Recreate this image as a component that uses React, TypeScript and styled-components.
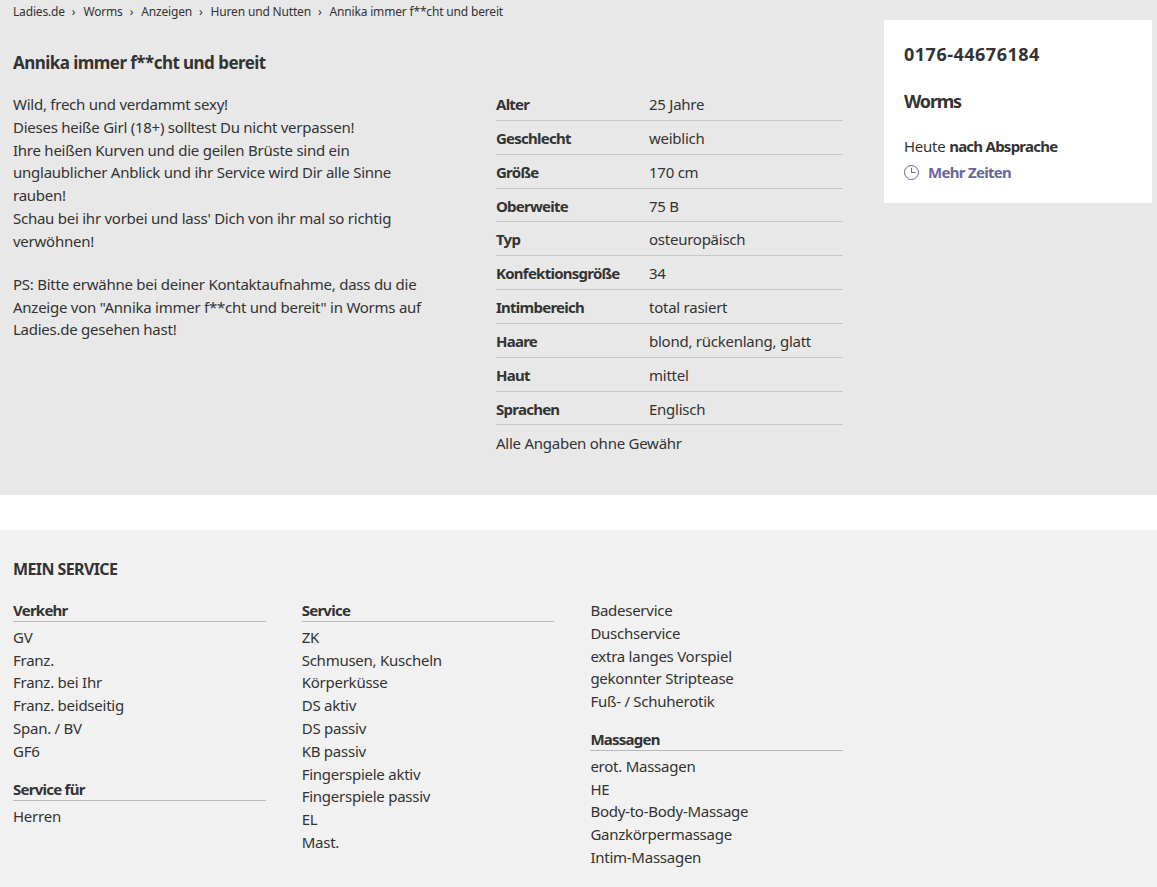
import React from 'react'
import styled, { createGlobalStyle } from 'styled-components'

const GlobalStyle = createGlobalStyle`
  html, body {
    margin: 0;
    padding: 0;
    background: #fff;
  }
  body {
    font-family: "Noto Sans", "Open Sans", sans-serif;
    font-size: 15px;
    color: #333;
    letter-spacing: -0.25px;
  }
  b {
    letter-spacing: -0.75px;
  }
`

const Page = styled.div`
  width: 1157px;
  height: 887px;
  overflow: hidden;
`

const Top = styled.div`
  background: #e8e8e8;
  height: 495px;
  display: flex;
  justify-content: space-between;
  padding: 0 5px 0 13px;
  box-sizing: border-box;
`

const Main = styled.div`
  width: 830px;
`

const Crumbs = styled.nav`
  display: flex;
  height: 23px;
  align-items: center;
  font-size: 12px;
  letter-spacing: -0.17px;
`

const Sep = styled.span`
  margin: 0 8px 0 7px;
`

const Title = styled.h1`
  margin: 28px 0 0;
  font-size: 17px;
  line-height: 24px;
  font-weight: 700;
  letter-spacing: -0.55px;
`

const Columns = styled.div`
  display: flex;
  justify-content: space-between;
  margin-top: 18px;
`

const Description = styled.div`
  width: 420px;
  line-height: 22.8px;
`

const Paragraph = styled.p`
  margin: 0 0 20.2px;
`

const Facts = styled.div`
  width: 347px;
`

const FactRow = styled.div`
  display: grid;
  grid-template-columns: 153px 1fr;
  height: 33.85px;
  line-height: 22px;
  box-sizing: border-box;
  padding-top: 6px;
  border-bottom: 1px solid #c6c6c6;

  &:first-child {
    height: 27.9px;
    padding-top: 0;
  }
`

const FactLabel = styled.span`
  font-weight: 700;
  letter-spacing: -0.75px;
`

const Note = styled.div`
  line-height: 22px;
  margin-top: 6.4px;
`

const Card = styled.aside`
  width: 268px;
  height: 183px;
  margin-top: 20px;
  background: #fff;
  padding: 22px 20px;
  box-sizing: border-box;
`

const CardHeading = styled.div<{ $spacing: number; $gap: number }>`
  font-size: 18px;
  font-weight: 700;
  line-height: 24px;
  margin-bottom: ${(p) => p.$gap}px;
  letter-spacing: ${(p) => p.$spacing}px;
`

const Hours = styled.div`
  line-height: 24px;
`

const MoreLink = styled.a`
  display: flex;
  align-items: center;
  gap: 9px;
  line-height: 24px;
  margin-top: 2px;
  color: #67679a;
  font-weight: 700;
  letter-spacing: -0.7px;
`

const Gap = styled.div`
  height: 35px;
`

const Service = styled.section`
  background: #f1f1f1;
  height: 357px;
  padding: 28px 13px 0;
  box-sizing: border-box;
`

const ServiceTitle = styled.h2`
  margin: 0;
  font-size: 16px;
  line-height: 22px;
  font-weight: 700;
  letter-spacing: -0.6px;
`

const ServiceGrid = styled.div`
  display: grid;
  grid-template-columns: repeat(3, 252.7px);
  column-gap: 36px;
  margin-top: 19px;
`

const Group = styled.div`
  margin-bottom: 15px;
`

const GroupTitle = styled.div`
  font-weight: 700;
  line-height: 22px;
  border-bottom: 1px solid #b9b9b9;
  margin-bottom: 3.9px;
  letter-spacing: -0.75px;
`

const Item = styled.div`
  line-height: 22.8px;
`

const facts = [
  ['Alter', '25 Jahre'],
  ['Geschlecht', 'weiblich'],
  ['Größe', '170 cm'],
  ['Oberweite', '75 B'],
  ['Typ', 'osteuropäisch'],
  ['Konfektionsgröße', '34'],
  ['Intimbereich', 'total rasiert'],
  ['Haare', 'blond, rückenlang, glatt'],
  ['Haut', 'mittel'],
  ['Sprachen', 'Englisch'],
]

const crumbs = ['Ladies.de', 'Worms', 'Anzeigen', 'Huren und Nutten']

const Clock = () => (
  <svg width="15" height="15" viewBox="0 0 15 15" fill="none" stroke="#67679a" strokeWidth="1">
    <circle cx="7.5" cy="7.5" r="7" />
    <path d="M7.5 3v4.5H11.5" />
  </svg>
)

const App = () => {
  return (
    <Page>
      <GlobalStyle />
      <Top>
        <Main>
          <Crumbs>
            {crumbs.map((c) => (
              <React.Fragment key={c}>
                {c}
                <Sep>›</Sep>
              </React.Fragment>
            ))}
            Annika immer f**cht und bereit
          </Crumbs>
          <Title>Annika immer f**cht und bereit</Title>
          <Columns>
            <Description>
              <Paragraph>
                Wild, frech und verdammt sexy!<br />
                Dieses heiße Girl (18+) solltest Du nicht verpassen!<br />
                Ihre heißen Kurven und die geilen Brüste sind ein<br />
                unglaublicher Anblick und ihr Service wird Dir alle Sinne<br />
                rauben!<br />
                Schau bei ihr vorbei und lass' Dich von ihr mal so richtig<br />
                verwöhnen!
              </Paragraph>
              <Paragraph>
                PS: Bitte erwähne bei deiner Kontaktaufnahme, dass du die<br />
                Anzeige von "Annika immer f**cht und bereit" in Worms auf<br />
                Ladies.de gesehen hast!
              </Paragraph>
            </Description>
            <Facts>
              {facts.map(([label, value]) => (
                <FactRow key={label}>
                  <FactLabel>{label}</FactLabel>
                  <span>{value}</span>
                </FactRow>
              ))}
              <Note>Alle Angaben ohne Gewähr</Note>
            </Facts>
          </Columns>
        </Main>
        <Card>
          <CardHeading $spacing={0.5} $gap={23}>0176-44676184</CardHeading>
          <CardHeading $spacing={-1.2} $gap={21}>Worms</CardHeading>
          <Hours>Heute <b>nach Absprache</b></Hours>
          <MoreLink><Clock />Mehr Zeiten</MoreLink>
        </Card>
      </Top>
      <Gap />
      <Service>
        <ServiceTitle>MEIN SERVICE</ServiceTitle>
        <ServiceGrid>
          <div>
            <Group>
              <GroupTitle>Verkehr</GroupTitle>
              {['GV', 'Franz.', 'Franz. bei Ihr', 'Franz. beidseitig', 'Span. / BV', 'GF6'].map((i) => <Item key={i}>{i}</Item>)}
            </Group>
            <Group>
              <GroupTitle>Service für</GroupTitle>
              <Item>Herren</Item>
            </Group>
          </div>
          <div>
            <Group>
              <GroupTitle>Service</GroupTitle>
              {['ZK', 'Schmusen, Kuscheln', 'Körperküsse', 'DS aktiv', 'DS passiv', 'KB passiv', 'Fingerspiele aktiv', 'Fingerspiele passiv', 'EL', 'Mast.'].map((i) => <Item key={i}>{i}</Item>)}
            </Group>
          </div>
          <div>
            <Group>
              {['Badeservice', 'Duschservice', 'extra langes Vorspiel', 'gekonnter Striptease', 'Fuß- / Schuherotik'].map((i) => <Item key={i}>{i}</Item>)}
            </Group>
            <Group>
              <GroupTitle>Massagen</GroupTitle>
              {['erot. Massagen', 'HE', 'Body-to-Body-Massage', 'Ganzkörpermassage', 'Intim-Massagen'].map((i) => <Item key={i}>{i}</Item>)}
            </Group>
          </div>
        </ServiceGrid>
      </Service>
    </Page>
  )
}

export default App
